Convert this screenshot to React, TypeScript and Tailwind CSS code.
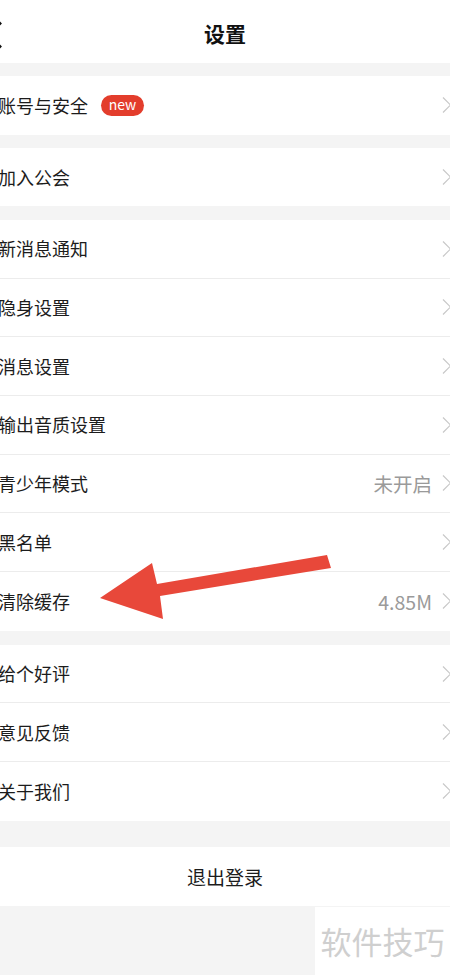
import type { ReactNode } from "react";

const font = { fontFamily: '"Noto Sans CJK SC", "Noto Sans", sans-serif' };

function Chevron() {
  return (
    <svg width="10" height="18" viewBox="0 0 10 18" className="-mr-[2px] ml-[10px] shrink-0" fill="none">
      <path d="M1 1.5 L8.5 9 L1 16.5" stroke="#c8c8c8" strokeWidth="1.2" />
    </svg>
  );
}

function Row({ label, value, badge }: { label: string; value?: string; badge?: boolean }) {
  return (
    <div className="flex h-[58.7px] items-center bg-white">
      <span className="-ml-[2px] text-[18px] text-[#1c1c1c]">{label}</span>
      {badge ? (
        <span className="ml-[13px] flex h-[21px] w-[43px] items-center justify-center rounded-full bg-[#e33d2c] pb-[2px] text-[14px] leading-none text-white">
          new
        </span>
      ) : null}
      <div className="flex-1" />
      {value ? <span className="text-[19.5px] text-[#9a9a9a]">{value}</span> : null}
      <Chevron />
    </div>
  );
}

function Section({ children, gap = "mt-[13px]" }: { children: ReactNode; gap?: string }) {
  return <div className={`${gap} flex flex-col divide-y divide-[#ececec] bg-white`}>{children}</div>;
}

export default function App() {
  return (
    <div className="relative h-[975px] w-[450px] overflow-hidden bg-[#f4f4f4]" style={font}>
      <header className="relative flex h-[63px] items-center justify-center bg-white pt-[4px]">
        <svg width="16" height="28" viewBox="0 0 16 28" className="absolute -left-[13px] top-[21px]" fill="none">
          <path d="M14 1.5 L2 14 L14 26.5" stroke="#111" strokeWidth="2.6" />
        </svg>
        <h1 className="text-[21px] font-bold text-[#111]">设置</h1>
      </header>

      <Section>
        <Row label="账号与安全" badge />
      </Section>

      <Section>
        <Row label="加入公会" />
      </Section>

      <Section gap="mt-[13.5px]">
        <Row label="新消息通知" />
        <Row label="隐身设置" />
        <Row label="消息设置" />
        <Row label="输出音质设置" />
        <Row label="青少年模式" value="未开启" />
        <Row label="黑名单" />
        <Row label="清除缓存" value="4.85M" />
      </Section>

      <Section gap="mt-[14px]">
        <Row label="给个好评" />
        <Row label="意见反馈" />
        <Row label="关于我们" />
      </Section>

      <div className="mt-[26.5px] flex h-[59px] items-center justify-center bg-white">
        <span className="text-[19px] text-[#1c1c1c]">退出登录</span>
      </div>

      <div className="flex justify-end pt-[1px]">
        <div className="flex h-[68px] w-[135px] items-center justify-center bg-white">
          <span className="text-[31px] text-[#cfcfcf]">软件技巧</span>
        </div>
      </div>

      <svg width="450" height="975" viewBox="0 0 450 975" className="pointer-events-none absolute left-0 top-0">
        <polygon
          points="327,555 331,568 160,596 163,619 100,598 152,563 157,584"
          fill="#e8483a"
          strokeLinejoin="round"
        />
      </svg>
    </div>
  );
}
